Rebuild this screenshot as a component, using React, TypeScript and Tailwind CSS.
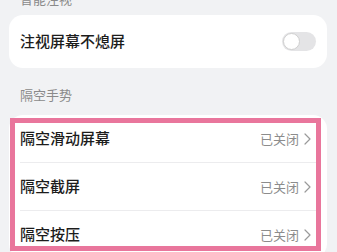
const font = { fontFamily: '"Noto Sans CJK SC", "Noto Sans", sans-serif' };

function Chevron() {
  return (
    <svg width="7" height="12" viewBox="0 0 7 12" fill="none" className="ml-[5px]">
      <path d="M1 1l5 5-5 5" stroke="#9a9a9a" strokeWidth="1.2" strokeLinecap="round" strokeLinejoin="round" />
    </svg>
  );
}

function Toggle() {
  return (
    <div className="relative h-[19px] w-[34px] rounded-full bg-[#e4e4e6]">
      <div className="absolute left-[1px] top-[1px] h-[17px] w-[17px] rounded-full border border-[#cfcfcf] bg-white" />
    </div>
  );
}

function Row({ label }: { label: string }) {
  return (
    <div className="flex h-[47px] items-center justify-between pl-[11px] pr-[16px]">
      <span className="text-[15px] font-medium text-[#1c1c1c]">{label}</span>
      <div className="flex items-center">
        <span className="text-[13px] text-[#8c8c8c]">已关闭</span>
        <Chevron />
      </div>
    </div>
  );
}

export default function App() {
  return (
    <div className="h-[252px] w-[337px] overflow-hidden bg-[#f1f2f4] pl-[9px] pr-[10px]" style={font}>
      <div className="mt-[-10px] h-[18px] pl-[11px] text-[13px] leading-[18px] text-[#8a8a8a]">智能注视</div>

      <div className="mt-[7px] flex h-[53px] items-center justify-between rounded-[14px] bg-white pl-[11px] pr-[11px]">
        <span className="text-[15px] font-medium text-[#1c1c1c]">注视屏幕不熄屏</span>
        <Toggle />
      </div>

      <div className="mt-[18px] h-[18px] pl-[11px] text-[13px] leading-[18px] text-[#8a8a8a]">隔空手势</div>

      <div className="relative mt-[11px] rounded-[14px] bg-white">
        <Row label="隔空滑动屏幕" />
        <div className="mx-[11px] h-px bg-[#ececee]" />
        <Row label="隔空截屏" />
        <div className="mx-[11px] h-px bg-[#ececee]" />
        <Row label="隔空按压" />
        <div className="pointer-events-none absolute left-[1px] right-[6px] top-[3px] h-[133px] border-[5px] border-[#e9769c]" />
      </div>
    </div>
  );
}
